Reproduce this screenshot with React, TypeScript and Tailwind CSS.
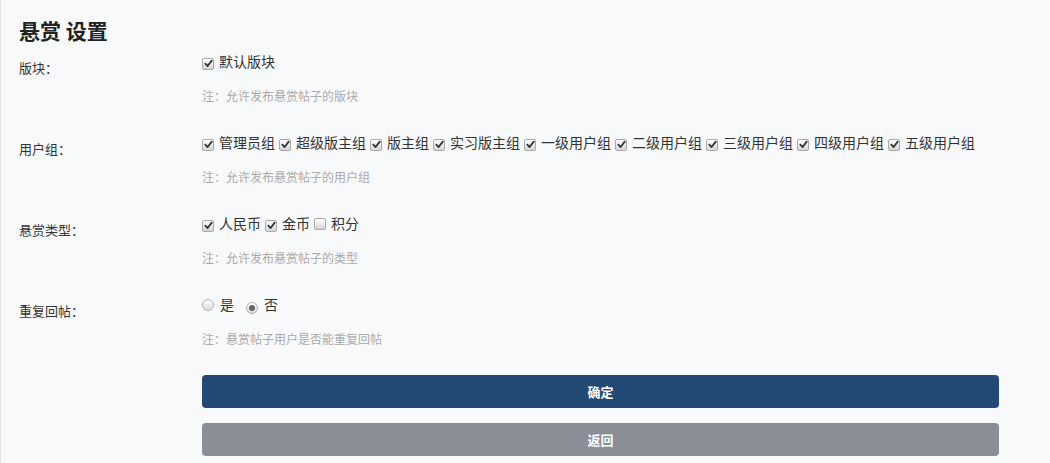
import React from "react";

type Opt = { label: string; checked: boolean };

function Check({ checked }: { checked: boolean }) {
    return (
        <span className="inline-flex items-center justify-center w-[12px] h-[12px] rounded-[2px] border border-[#a9a9a9] bg-gradient-to-b from-[#ffffff] to-[#d6d6d6] align-[-1px] mr-[5px]">
            {checked && (
                <svg width="9" height="9" viewBox="0 0 10 10">
                    <path d="M1.5 5.2 L4 7.8 L8.6 1.8" fill="none" stroke="#333" strokeWidth="2" strokeLinecap="round" strokeLinejoin="round" />
                </svg>
            )}
        </span>
    )
}

function Radio({ checked }: { checked: boolean }) {
    return (
        <span className="inline-flex items-center justify-center w-[12px] h-[12px] rounded-full border border-[#b3b3b3] bg-gradient-to-b from-[#ffffff] to-[#d9d9d9] align-[-1px] mr-[6px]">
            {checked && <span className="w-[6px] h-[6px] rounded-full bg-[#666]" />}
        </span>
    )
}

function Row({ label, note, children }: { label: string; note: string; children: React.ReactNode }) {
    return (
        <div className="flex pb-[27px]">
            <div className="w-[183px] shrink-0 pt-[7px] text-[13px] leading-[20px] text-[#333]">{label}</div>
            <div>
                <div className="text-[14px] leading-[20px] text-[#333] whitespace-nowrap">{children}</div>
                <div className="mt-[16px] text-[12px] leading-[18px] text-[#aaa]">{note}</div>
            </div>
        </div>
    )
}

export default function App() {
    const groups: Opt[] = [
        { label: "管理员组", checked: true },
        { label: "超级版主组", checked: true },
        { label: "版主组", checked: true },
        { label: "实习版主组", checked: true },
        { label: "一级用户组", checked: true },
        { label: "二级用户组", checked: true },
        { label: "三级用户组", checked: true },
        { label: "四级用户组", checked: true },
        { label: "五级用户组", checked: true },
    ]
    const types: Opt[] = [
        { label: "人民币", checked: true },
        { label: "金币", checked: true },
        { label: "积分", checked: false },
    ]

    return (
        <div className="w-[1050px] h-[463px] overflow-hidden bg-[#f8f9fb] border-l border-[#e3e4e7] pl-[18px] pt-[16px] font-['Noto_Sans_CJK_SC','Noto_Sans',sans-serif]">
            <h1 className="text-[21px] leading-[28px] font-bold text-[#222] mb-[7px]">悬赏 设置</h1>

            <Row label="版块：" note="注：允许发布悬赏帖子的版块">
                <Check checked={true} />默认版块
            </Row>

            <Row label="用户组：" note="注：允许发布悬赏帖子的用户组">
                {groups.map((g) => (
                    <span key={g.label} className="mr-[4px]">
                        <Check checked={g.checked} />{g.label}
                    </span>
                ))}
            </Row>

            <Row label="悬赏类型：" note="注：允许发布悬赏帖子的类型">
                {types.map((t) => (
                    <span key={t.label} className="mr-[4px]">
                        <Check checked={t.checked} />{t.label}
                    </span>
                ))}
            </Row>

            <Row label="重复回帖：" note="注：悬赏帖子用户是否能重复回帖">
                <span className="mr-[12px]"><Radio checked={false} />是</span>
                <span><Radio checked={true} />否</span>
            </Row>

            <div className="ml-[183px] w-[797px] flex flex-col gap-[15px]">
                <button className="h-[33px] rounded-[4px] bg-[#234a75] text-white text-[13px] font-bold">确定</button>
                <button className="h-[33px] rounded-[4px] bg-[#8a8e96] text-white text-[13px] font-bold">返回</button>
            </div>
        </div>
    )
}
